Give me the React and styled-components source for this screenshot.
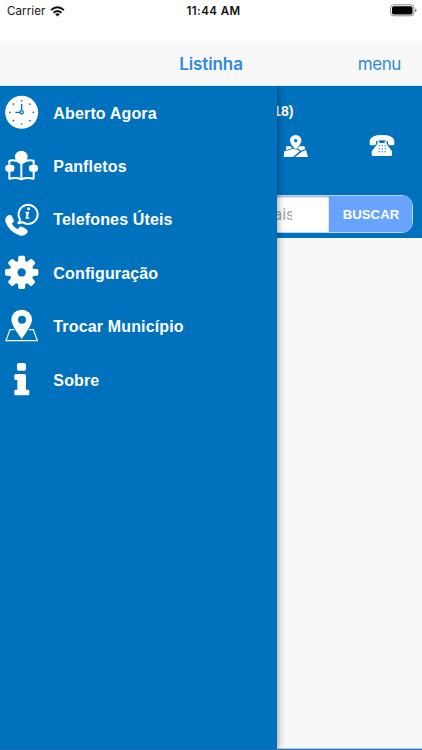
import styled, { createGlobalStyle } from 'styled-components';

const GlobalStyle = createGlobalStyle`
  * {
    box-sizing: border-box;
  }
  body {
    margin: 0;
    background-color: #ffffff;
    font-family: "Liberation Sans", Arial, sans-serif;
  }
`;

const Screen = styled.div`
  width: 100%;
  height: 100vh;
  display: flex;
  flex-direction: column;
  overflow: hidden;
`;

const StatusBar = styled.div`
  flex: none;
  height: 41px;
  padding: 3px 5px 0 7px;
  display: grid;
  grid-template-columns: 1fr auto 1fr;
  align-items: start;
  font-family: Inter, sans-serif;
  font-size: 11.5px;
  line-height: 16px;
  color: #111111;

  .carrier {
    display: flex;
    align-items: center;
    gap: 5px;
    letter-spacing: 0.1px;
  }
  .clock {
    padding-left: 3px;
    font-weight: 600;
    letter-spacing: 0.45px;
  }
  .battery {
    justify-self: end;
    margin-top: 1px;
    display: block;
  }
`;

const NavBar = styled.div`
  flex: none;
  height: 45px;
  padding: 2px 21px 0;
  display: grid;
  grid-template-columns: 1fr auto 1fr;
  align-items: center;
  background-color: #f8f8f8;
  border-bottom: 1px solid #d9e6f0;
  font-family: Inter, sans-serif;
  color: #2f8ad8;

  .title {
    grid-column: 2;
    font-size: 17px;
    font-weight: 600;
    letter-spacing: -0.1px;
  }
  .menu {
    justify-self: end;
    font-size: 17px;
    letter-spacing: -0.4px;
  }
`;

const Body = styled.div`
  flex: 1;
  position: relative;
  display: flex;
  flex-direction: column;
  overflow: hidden;
  background-color: #f8f8f8;
  border-bottom: 1px solid #1c72b5;
`;

const Panel = styled.div`
  height: 152px;
  padding: 16px 9px 0 0;
  background-color: #0071bd;
  color: #ffffff;
`;

const Count = styled.div`
  width: 293.5px;
  height: 18px;
  text-align: right;
  font-size: 14px;
  font-weight: bold;
  line-height: 18px;
`;

const Shortcuts = styled.div`
  height: 75px;
  padding: 14px 18px 0 0;
  display: flex;
  justify-content: flex-end;
  gap: 60px;
`;

const Search = styled.div`
  height: 38px;
  display: flex;
  border: 1px solid #b9d7f5;
  border-radius: 11px;
  overflow: hidden;

  .field {
    width: 328px;
    display: flex;
    justify-content: flex-end;
    padding-right: 37px;
    background-color: #ffffff;
    box-shadow: inset 0 1px 2px #9aa4ad;
    color: #a3a3a3;
    font-family: Roboto, sans-serif;
    font-size: 16px;
    line-height: 38px;
  }
  .hint {
    width: 18.5px;
    overflow: hidden;
  }
  .button {
    flex: 1;
    background-color: #68a3ff;
    color: #ffffff;
    font-size: 13.2px;
    font-weight: bold;
    line-height: 37px;
    padding-left: 1px;
    text-align: center;
  }
`;

const FootLine = styled.div`
  margin-top: auto;
  height: 1px;
  background-color: #a9cdea;
`;

const Drawer = styled.nav`
  position: absolute;
  top: 0;
  left: 0;
  bottom: 0;
  width: 277px;
  background-color: #0071bd;
  box-shadow: 1px 0 7px rgba(0, 0, 0, 0.38);
`;

const Item = styled.div`
  height: 53.4px;
  padding-left: 5px;
  display: flex;
  align-items: center;
  gap: 15px;
  color: #ffffff;
  font-size: 16px;
  font-weight: bold;
  letter-spacing: 0.15px;

  svg {
    flex: none;
    width: 33.33px;
    height: 33.33px;
    overflow: visible;
  }
  span {
    padding-top: 2px;
  }
`;

const blue = '#0071bd';

const WifiIcon = () => (
  <svg width="15" height="11" viewBox="0 0 15 11" fill="none" stroke="#111" strokeWidth="1.9">
    <path d="M1 4.1 Q7.5 -1.8 14 4.1" />
    <path d="M3.5 6.7 Q7.5 3.1 11.5 6.7" />
    <path d="M7.5 10.6 L5.2 8.3 Q7.5 6.4 9.8 8.3 Z" fill="#111" stroke="none" />
  </svg>
);

const BatteryIcon = () => (
  <svg className="battery" width="27" height="13" viewBox="0 0 27 13">
    <rect x="0.6" y="0.8" width="23.3" height="11" rx="3" fill="none" stroke="#8c8c8c" />
    <rect x="2" y="2.2" width="20.5" height="8.2" rx="1.6" fill="#000" />
    <path d="M25 4.4 Q26.6 5 26.6 6.3 Q26.6 7.6 25 8.2 Z" fill="#8c8c8c" />
  </svg>
);

const MapIcon = () => (
  <svg width="26" height="24" viewBox="0 0 78 72" fill="#fff">
    <path d="M10 37 H23 L28 43 L9 48 Z M4 52 L38 43 L50 52 L30 69 H2 Z M40 40 L46 37 H64 L67 45 L54 50 Z M56 53 L69 48 L75 69 H36 Z" />
    <path d="M38 48 Q20 30 20 19 A18 17 0 0 1 56 19 Q56 30 38 48 Z" stroke={blue} strokeWidth="2" />
    <circle cx="38" cy="20" r="5" fill={blue} />
  </svg>
);

const TelephoneIcon = () => (
  <svg width="26" height="24" viewBox="0 0 78 72" fill="#fff">
    <path d="M2 30 V20 Q5 3 39 3 Q73 3 76 20 V30 Q76 34 72 34 H62 Q57 34 57 28 V22 Q39 15 21 22 V28 Q21 34 16 34 H6 Q2 34 2 30 Z" />
    <path d="M25 22 H31 V27 H47 V22 H53 V30 L69 52 V62 Q69 66 65 66 H13 Q8 66 8 62 V52 L25 30 Z" />
    <g fill={blue}>
      {[33, 42, 51].map((y) =>
        [29, 38, 47].map((x) => <rect key={`${x}-${y}`} x={x} y={y} width="3" height="4" />)
      )}
    </g>
  </svg>
);

const ClockIcon = () => (
  <svg viewBox="15 18 100 100">
    <circle cx="65" cy="67" r="49.5" fill="#fff" />
    <g stroke={blue} strokeWidth="4" fill="none">
      <path d="M65 61 V42 M60 67 H46" />
      <circle cx="65" cy="67" r="5" />
    </g>
    {[0, 45, 90, 135, 180, 225, 270, 315].map((a) => (
      <circle
        key={a}
        cx="65"
        cy="32"
        r="2.6"
        fill={blue}
        transform={`rotate(${a} 65 67)`}
      />
    ))}
  </svg>
);

const ReaderIcon = () => (
  <svg viewBox="15 19 100 100">
    <circle cx="64" cy="43" r="19" fill="#fff" />
    <g fill="none" stroke="#fff" strokeWidth="6" strokeLinejoin="round">
      <path d="M64 63 Q49 50 28 54 V108 Q50 103 64 110 Q78 103 101 108 V54 Q79 50 64 63 V110" />
    </g>
    <rect x="16" y="67" width="27" height="20" rx="7" fill="#fff" />
    <rect x="87" y="67" width="27" height="20" rx="7" fill="#fff" />
  </svg>
);

const CallInfoIcon = () => (
  <svg viewBox="15 17.5 100 100">
    <path
      d="M18 60 Q25 51 33 54 Q37 57 42 71 Q42 76 35 80 Q41 90 53 96 Q58 88 62 88 Q67 88 81 98 Q86 102 81 108 Q71 118 59 115 Q28 105 16 74 Q14 66 18 60 Z"
      fill="#fff"
    />
    <path
      d="M61 68 L55 78 L68 75 A28.5 28.5 0 1 0 61 68 Z"
      fill="none"
      stroke="#fff"
      strokeWidth="6"
      strokeLinejoin="round"
    />
    <circle cx="86" cy="35" r="4.5" fill="#fff" />
    <path d="M77 44 H88 L83 60 H89 L87 65 H76 L80 49 H76 Z" fill="#fff" />
  </svg>
);

const GearIcon = () => (
  <svg viewBox="15 18.7 100 100">
    <g fill="#fff">
      <circle cx="65" cy="68" r="36" />
      {[0, 45, 90, 135, 180, 225, 270, 315].map((a) => (
        <path
          key={a}
          d="M54 36 L55 22 Q56 18 59 18 H71 Q74 18 75 22 L76 36 Z"
          transform={`rotate(${a} 65 68)`}
        />
      ))}
    </g>
    <circle cx="65" cy="68" r="12.5" fill={blue} />
  </svg>
);

const PlaceIcon = () => (
  <svg viewBox="15 20 100 100">
    <path
      d="M43 79 H30 L18 112 H112 L100 79 H87"
      fill="none"
      stroke="#fff"
      strokeWidth="3.5"
    />
    <path d="M65 107 Q34 65 34 49 A31 30 0 0 1 96 49 Q96 65 65 107 Z" fill="#fff" />
    <circle cx="66" cy="49" r="12" fill={blue} />
  </svg>
);

const InfoIcon = () => (
  <svg viewBox="15 18 100 100" fill="#fff">
    <rect x="51" y="18" width="27" height="23" rx="5" />
    <path d="M48 51 H73 Q78 51 78 56 V98 H84 Q88 98 88 102 V111 Q88 115 84 115 H47 Q43 115 43 111 V102 Q43 98 47 98 H52 V69 H48 Q43 69 43 65 V56 Q43 51 48 51 Z" />
  </svg>
);

const items = [
  { label: 'Aberto Agora', Icon: ClockIcon },
  { label: 'Panfletos', Icon: ReaderIcon },
  { label: 'Telefones Úteis', Icon: CallInfoIcon },
  { label: 'Configuração', Icon: GearIcon },
  { label: 'Trocar Município', Icon: PlaceIcon },
  { label: 'Sobre', Icon: InfoIcon },
];

const App = () => {
  return (
    <>
      <GlobalStyle />
      <Screen>
        <StatusBar>
          <div className="carrier">
            Carrier
            <WifiIcon />
          </div>
          <div className="clock">11:44 AM</div>
          <BatteryIcon />
        </StatusBar>
        <NavBar>
          <div className="title">Listinha</div>
          <div className="menu">menu</div>
        </NavBar>
        <Body>
          <Panel>
            <Count>18)</Count>
            <Shortcuts>
              <MapIcon />
              <TelephoneIcon />
            </Shortcuts>
            <Search>
              <div className="field">
                <div className="hint">ais</div>
              </div>
              <div className="button">BUSCAR</div>
            </Search>
          </Panel>
          <FootLine />
          <Drawer>
            {items.map(({ label, Icon }) => (
              <Item key={label}>
                <Icon />
                <span>{label}</span>
              </Item>
            ))}
          </Drawer>
        </Body>
      </Screen>
    </>
  );
};

export default App;
